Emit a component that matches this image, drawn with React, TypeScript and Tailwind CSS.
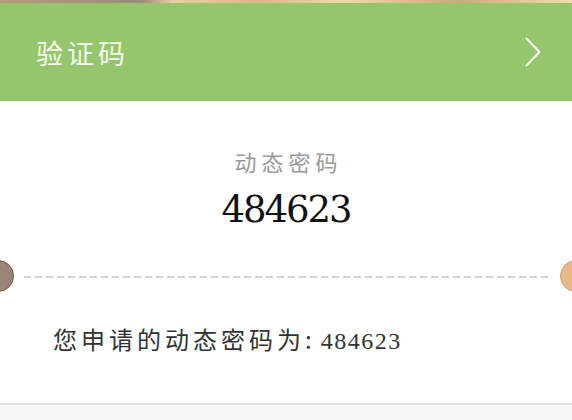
import React from "react";

const cjk = { fontFamily: '"Noto Sans CJK SC", "Noto Sans", sans-serif' };
const serif = { fontFamily: '"DejaVu Serif", "Liberation Serif", serif' };
const serif2 = { fontFamily: '"Liberation Serif", "DejaVu Serif", serif' };

export default function App() {
  return (
    <div className="w-[572px] h-[420px] bg-[#f8f8f8] overflow-hidden flex flex-col">
      <div className="h-[3px] bg-[linear-gradient(90deg,#b79a77_0%,#9c8a7c_25%,#e9cf9e_30%,#d7b98b_45%,#f0d9a8_60%,#caa97c_80%,#f1dcae_100%)]" />
      <div className="h-[98px] bg-[#95c56d] flex items-center justify-between pl-[36px] pr-[31px]">
        <span
          className="text-[27px] leading-[27px] tracking-[4px] text-[#f6faf1]"
          style={cjk}
        >
          验证码
        </span>
        <svg width="16" height="30" viewBox="0 0 16 30" fill="none">
          <polyline
            points="1.5,1.5 14.5,15 1.5,28.5"
            stroke="#ffffff"
            strokeWidth="2"
            strokeLinecap="round"
            strokeLinejoin="round"
          />
        </svg>
      </div>
      <div className="h-[304px] bg-white border-b-2 border-[#e4e4e4] flex flex-col">
        <div
          className="mt-[49px] text-center text-[22px] leading-[22px] tracking-[5px] text-[#9a9a9a] pl-[5px]"
          style={cjk}
        >
          动态密码
        </div>
        <div
          className="mt-[17px] text-center text-[37px] leading-[41px] tracking-[-2px] text-[#111111]"
          style={serif}
        >
          484623
        </div>
        <div className="relative mt-[46px] h-[2px] mx-[24px] bg-[repeating-linear-gradient(90deg,#d4d4d4_0px,#d4d4d4_7px,transparent_7px,transparent_11px)]">
          <div className="absolute left-[-42px] top-[-16px] w-[32px] h-[32px] rounded-full bg-[#9b847a] border border-[#6f5b53]" />
          <div className="absolute right-[-44px] top-[-16px] w-[32px] h-[32px] rounded-full bg-[#e9b98c] border border-[#d19c6c]" />
        </div>
        <div className="mt-[48px] pl-[53px] flex items-baseline text-[#333333]">
          <span className="text-[24px] leading-[26px] tracking-[4px]" style={cjk}>
            您申请的动态密码为:
          </span>
          <span className="text-[24px] leading-[26px] tracking-[1.5px] pl-[5px]" style={serif2}>
            484623
          </span>
        </div>
      </div>
    </div>
  );
}
